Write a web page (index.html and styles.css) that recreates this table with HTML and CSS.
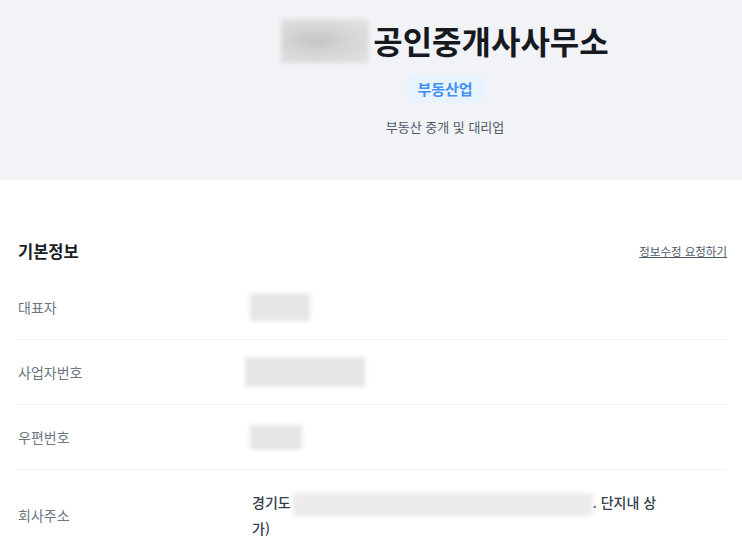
FILE: index.html
```html
<!DOCTYPE html>
<html lang="ko">
<head>
<meta charset="utf-8">
<title>공인중개사사무소</title>
<link rel="stylesheet" href="styles.css">
</head>
<body>
<header class="hero">
  <div class="hero-inner">
    <div class="title-row">
      <span class="blur blur-title"></span>
      <h1 class="title">공인중개사사무소</h1>
    </div>
    <span class="badge">부동산업</span>
    <p class="subtitle">부동산 중개 및 대리업</p>
  </div>
</header>
<main class="section">
  <div class="section-head">
    <h2 class="section-title">기본정보</h2>
    <a class="edit-link" href="#">정보수정 요청하기</a>
  </div>
  <div class="row">
    <div class="label">대표자</div>
    <div class="value"><span class="blur blur-rep"></span></div>
  </div>
  <div class="row">
    <div class="label">사업자번호</div>
    <div class="value"><span class="blur blur-biz"></span></div>
  </div>
  <div class="row">
    <div class="label">우편번호</div>
    <div class="value"><span class="blur blur-zip"></span></div>
  </div>
  <div class="row">
    <div class="label">회사주소</div>
    <div class="value-text">경기도 <span class="blur blur-addr"></span>. 단지내 상<br>가)</div>
  </div>
</main>
</body>
</html>
```
FILE: styles.css
```css
* { box-sizing: border-box; }
html, body { margin: 0; padding: 0; }
body {
  background: #ffffff;
  font-family: "Noto Sans CJK KR", "Noto Sans", "Liberation Sans", sans-serif;
  color: #191f28;
  overflow: hidden;
}
.hero {
  height: 180px;
  background: #f2f3f6;
  padding-left: 148px;
}
.hero-inner {
  display: flex;
  flex-direction: column;
  align-items: center;
  padding-top: 18px;
}
.title-row {
  display: flex;
  align-items: center;
  gap: 4px;
  height: 45px;
}
.title {
  margin: 0;
  font-size: 32px;
  font-weight: 700;
  line-height: 45px;
  color: #16191f;
}
.blur {
  display: inline-block;
  background: #e6e6e6;
  filter: blur(2px);
  border-radius: 2px;
}
.blur-title {
  width: 88px;
  height: 44px;
  background: radial-gradient(ellipse at 40% 50%, #c4c4c4 0%, #d6d6d6 45%, #e4e4e6 100%);
}
.badge {
  margin-top: 11px;
  display: inline-block;
  height: 29px;
  line-height: 29px;
  padding: 0 12px;
  border-radius: 10px;
  background: #e8f3ff;
  color: #4190f7;
  font-size: 15px;
  font-weight: 700;
}
.subtitle {
  margin: 15px 0 0;
  font-size: 13px;
  line-height: 18px;
  color: #4e5968;
}
.section {
  padding: 59px 15px 0 16px;
}
.section-head {
  display: flex;
  justify-content: space-between;
  align-items: center;
  height: 24px;
  padding-left: 2px;
  margin-bottom: 12px;
}
.section-title {
  margin: 0;
  font-size: 16.5px;
  font-weight: 700;
  color: #191f28;
}
.edit-link {
  font-size: 11.5px;
  color: #4e5968;
  text-decoration: underline;
}
.row {
  display: flex;
  align-items: center;
  padding: 20px 0;
  border-bottom: 1px solid #f2f3f5;
}
.label {
  width: 236px;
  flex: none;
  padding-left: 2px;
  font-size: 14px;
  line-height: 24px;
  color: #6b7684;
}
.value {
  height: 24px;
  display: flex;
  align-items: center;
}
.value-text {
  width: 420px;
  font-size: 14px;
  line-height: 24px;
  color: #333d4b;
  font-weight: 500;
}
.blur-rep { width: 60px; height: 28px; margin-left: -2px; flex: none; }
.blur-biz { width: 120px; height: 30px; margin-left: -7px; flex: none; }
.blur-zip { width: 52px; height: 25px; margin-left: -2px; flex: none; }
.blur-addr { width: 300px; height: 23px; vertical-align: middle; margin-left: -2px; background: #ebebeb; }
```
